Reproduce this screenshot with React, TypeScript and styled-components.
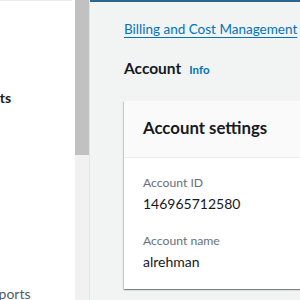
import React from "react"
import styled, { createGlobalStyle } from "styled-components"

const Global = createGlobalStyle`
  html, body { margin: 0; padding: 0; }
  body {
    width: 300px;
    height: 300px;
    overflow: hidden;
    font-family: Lato, "Open Sans", sans-serif;
    background: #f2f3f3;
  }
`

const Page = styled.div`
  display: flex;
  width: 300px;
  height: 300px;
  overflow: hidden;
`

const Sidebar = styled.nav`
  width: 75px;
  flex-shrink: 0;
  background: #ffffff;
  display: flex;
  flex-direction: column;
  overflow: hidden;
`

const SideTop = styled.div`
  height: 12px;
  margin-right: 3px;
  border-bottom: 1px solid #e9ebed;
`

const SideItem = styled.div<{ $bold?: boolean; $top: number; $shift: number }>`
  margin-top: ${(p) => p.$top}px;
  margin-left: -${(p) => p.$shift}px;
  white-space: nowrap;
  font-size: 14px;
  font-weight: ${(p) => (p.$bold ? 700 : 400)};
  color: ${(p) => (p.$bold ? "#16191f" : "#545b64")};
  line-height: 16px;
`

const Scrollbar = styled.div`
  width: 14px;
  flex-shrink: 0;
  background: #f1f1f1;
  border-right: 1px solid #e4e4e4;
  display: flex;
  flex-direction: column;
`

const Thumb = styled.div`
  height: 155px;
  background: #c1c1c1;
`

const Main = styled.main`
  flex: 1;
  border-top: 2px solid #2d6490;
  padding: 17px 0 0 34px;
  display: flex;
  flex-direction: column;
  overflow: hidden;
`

const Crumbs = styled.div`
  display: flex;
  align-items: center;
  gap: 9px;
  white-space: nowrap;
  font-size: 13.5px;
  line-height: 20px;
`

const CrumbLink = styled.a`
  color: #0073bb;
  text-decoration: underline;
  text-underline-offset: 3px;
`

const CrumbSep = styled.span`
  color: #687078;
`

const TitleRow = styled.div`
  display: flex;
  align-items: baseline;
  gap: 8px;
  margin-top: 18px;
`

const Title = styled.h1`
  margin: 0;
  font-size: 15.5px;
  font-weight: 700;
  color: #16191f;
  line-height: 22px;
`

const InfoLink = styled.span`
  font-size: 11.5px;
  font-weight: 700;
  color: #0073bb;
`

const Card = styled.section`
  margin-top: 22px;
  width: 240px;
  background: #ffffff;
  box-shadow: 0 1px 1px 0 rgba(0, 28, 36, 0.3), 1px 1px 1px 0 rgba(0, 28, 36, 0.15),
    -1px 1px 1px 0 rgba(0, 28, 36, 0.15);
  flex-shrink: 0;
`

const CardHeader = styled.header`
  background: #fafafa;
  border-bottom: 1px solid #eaeded;
  padding: 16px 19px 18px;
`

const CardTitle = styled.h2`
  margin: 0;
  font-size: 16.8px;
  font-weight: 700;
  color: #16191f;
  line-height: 22px;
`

const CardBody = styled.div`
  padding: 16px 19px 18px;
  display: flex;
  flex-direction: column;
  gap: 19px;
`

const Field = styled.div`
  display: flex;
  flex-direction: column;
  gap: 3px;
`

const Label = styled.div`
  font-size: 12.2px;
  color: #687078;
  line-height: 18px;
`

const Value = styled.div`
  font-size: 14px;
  color: #16191f;
  line-height: 18px;
`

export default function App() {
  return (
    <>
      <Global />
      <Page>
        <Sidebar>
          <SideTop />
          <SideItem $bold $top={89} $shift={50}>
            Payments
          </SideItem>
          <SideItem $top={180} $shift={98}>
            Cost &amp; usage reports
          </SideItem>
        </Sidebar>
        <Scrollbar>
          <Thumb />
        </Scrollbar>
        <Main>
          <Crumbs>
            <CrumbLink>Billing and Cost Management</CrumbLink>
            <CrumbSep>&gt;</CrumbSep>
          </Crumbs>
          <TitleRow>
            <Title>Account</Title>
            <InfoLink>Info</InfoLink>
          </TitleRow>
          <Card>
            <CardHeader>
              <CardTitle>Account settings</CardTitle>
            </CardHeader>
            <CardBody>
              <Field>
                <Label>Account ID</Label>
                <Value>146965712580</Value>
              </Field>
              <Field>
                <Label>Account name</Label>
                <Value>alrehman</Value>
              </Field>
            </CardBody>
          </Card>
        </Main>
      </Page>
    </>
  )
}
